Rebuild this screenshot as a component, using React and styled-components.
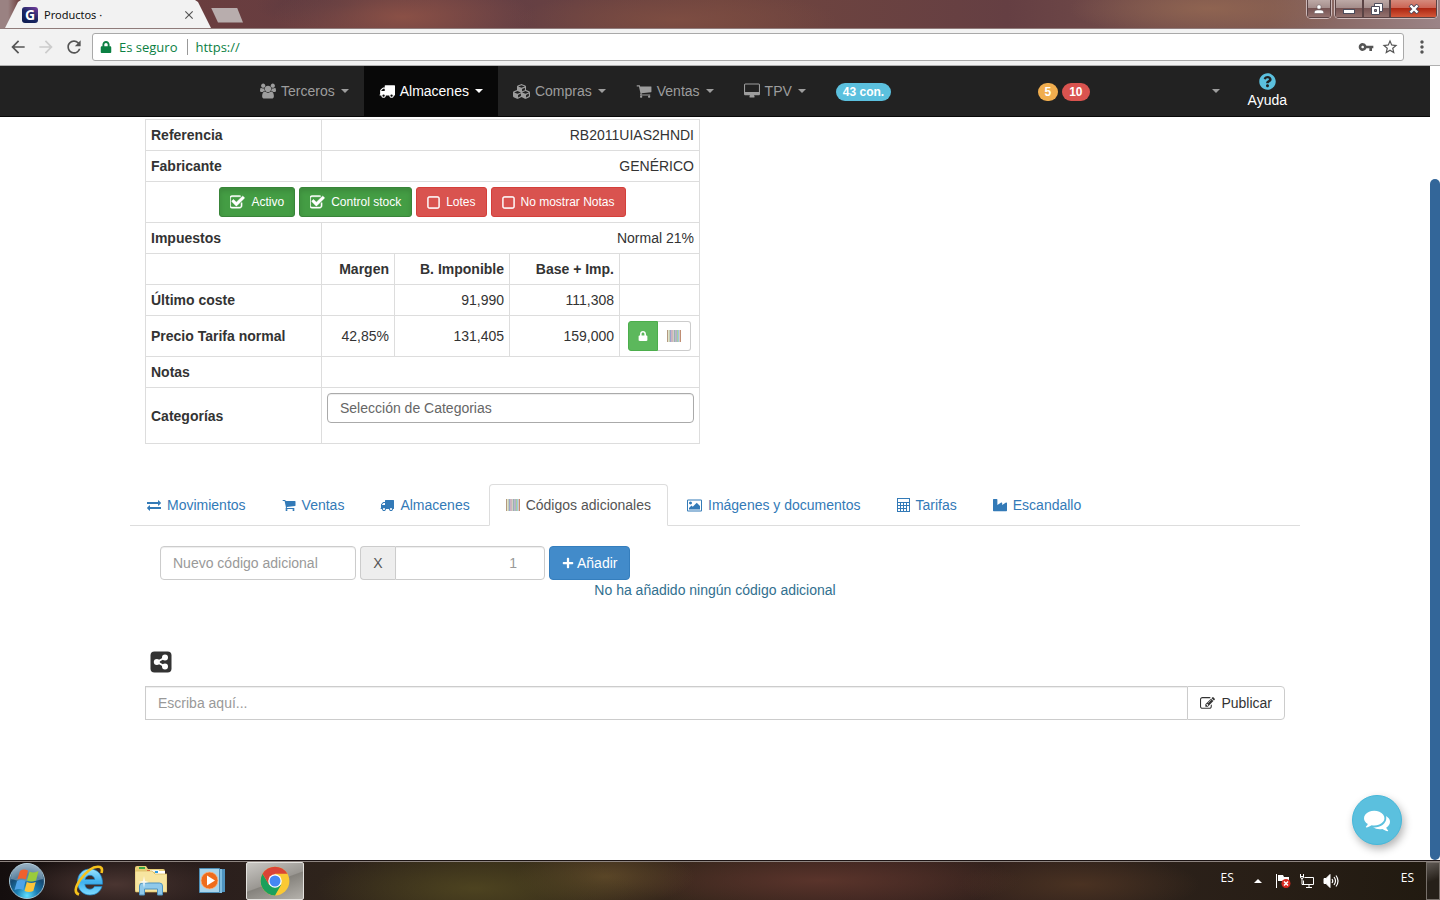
import styled, { createGlobalStyle, css } from "styled-components";
import { FaCubes, FaIndustry, FaLock, FaPlus, FaQuestionCircle } from "react-icons/fa";
import {
  MdArrowBack,
  MdArrowForward,
  MdClose,
  MdMoreVert,
  MdRefresh,
  MdStarBorder,
  MdVpnKey,
} from "react-icons/md";

const ICONS = {
  users: {
    box: "-64 0 1920 1792",
    d: "M529 896q-162 5-265 128h-134q-82 0-138-40.5t-56-118.5q0-353 124-353 6 0 43.5 21t97.5 42.5 119 21.5q67 0 133-23-5 37-5 66 0 139 81 256zm1071 637q0 120-73 189.5t-194 69.5h-874q-121 0-194-69.5t-73-189.5q0-53 3.5-103.5t14-109 26.5-108.5 43-97.5 62-81 85.5-53.5 111.5-20q10 0 43 21.5t73 48 107 48 135 21.5 135-21.5 107-48 73-48 43-21.5q61 0 111.5 20t85.5 53.5 62 81 43 97.5 26.5 108.5 14 109 3.5 103.5zm-1024-1277q0 106-75 181t-181 75-181-75-75-181 75-181 181-75 181 75 75 181zm704 384q0 159-112.5 271.5t-271.5 112.5-271.5-112.5-112.5-271.5 112.5-271.5 271.5-112.5 271.5 112.5 112.5 271.5zm576 225q0 78-56 118.5t-138 40.5h-134q-103-123-265-128 81-117 81-256 0-29-5-66 66 23 133 23 59 0 119-21.5t97.5-42.5 43.5-21q124 0 124 353zm-128-609q0 106-75 181t-181 75-181-75-75-181 75-181 181-75 181 75 75 181z",
  },
  truck: {
    d: "M640 1408q0-52-38-90t-90-38-90 38-38 90 38 90 90 38 90-38 38-90zm-384-512h384v-256h-158q-13 0-22 9l-195 195q-9 9-9 22v30zm1280 512q0-52-38-90t-90-38-90 38-38 90 38 90 90 38 90-38 38-90zm256-1088v1024q0 15-4 26.5t-13.5 18.5-16.5 11.5-23.5 6-22.5 2-25.5 0-22.5-.5q0 106-75 181t-181 75-181-75-75-181h-384q0 106-75 181t-181 75-181-75-75-181h-64q-3 0-22.5.5t-25.5 0-22.5-2-23.5-6-16.5-11.5-13.5-18.5-4-26.5q0-26 19-45t45-19v-320q0-8-.5-35t0-38 2.5-34.5 6.5-37 14-30.5 22.5-30l198-198q19-19 50.5-32t58.5-13h160v-192q0-26 19-45t45-19h1024q26 0 45 19t19 45z",
  },
  cart: {
    d: "M704 1536q0 52-38 90t-90 38-90-38-38-90 38-90 90-38 90 38 38 90zm896 0q0 52-38 90t-90 38-90-38-38-90 38-90 90-38 90 38 38 90zm128-1088v512q0 24-16.5 42.5t-40.5 21.5l-1044 122q13 60 13 70 0 16-24 64h920q26 0 45 19t19 45-19 45-45 19h-1024q-26 0-45-19t-19-45q0-11 8-31.5t16-36 21.5-40 15.5-29.5l-177-823h-204q-26 0-45-19t-19-45 19-45 45-19h256q16 0 28.5 6.5t19.5 15.5 13 24.5 8 26 5.5 29.5 4.5 26h1201q26 0 45 19t19 45z",
  },
  desktop: {
    box: "-64 0 1920 1792",
    d: "M1728 992v-832q0-13-9.5-22.5t-22.5-9.5h-1600q-13 0-22.5 9.5t-9.5 22.5v832q0 13 9.5 22.5t22.5 9.5h1600q13 0 22.5-9.5t9.5-22.5zm128-832v1088q0 66-47 113t-113 47h-544q0 37 16 77.5t32 71 16 43.5q0 26-19 45t-45 19h-512q-26 0-45-19t-19-45q0-14 16-44t32-70 16-78h-544q-66 0-113-47t-47-113v-1088q0-66 47-113t113-47h1600q66 0 113 47t47 113z",
  },
  picture: {
    box: "-64 0 1920 1792",
    d: "M576 576q0 80-56 136t-136 56-136-56-56-136 56-136 136-56 136 56 56 136zm1024 384v448h-1408v-192l320-320 160 160 512-512zm96-704h-1600q-13 0-22.5 9.5t-9.5 22.5v1216q0 13 9.5 22.5t22.5 9.5h1600q13 0 22.5-9.5t9.5-22.5v-1216q0-13-9.5-22.5t-22.5-9.5zm160 32v1216q0 66-47 113t-113 47h-1600q-66 0-113-47t-47-113v-1216q0-66 47-113t113-47h1600q66 0 113 47t47 113z",
  },
  exchange: {
    d: "M1792 1184v192q0 13-9.5 22.5t-22.5 9.5h-1376v192q0 13-9.5 22.5t-22.5 9.5q-12 0-24-10l-319-320q-9-9-9-22 0-14 9-23l320-320q9-9 23-9 13 0 22.5 9.5t9.5 22.5v192h1376q13 0 22.5 9.5t9.5 22.5zm0-544q0 14-9 23l-320 320q-9 9-23 9-13 0-22.5-9.5t-9.5-22.5v-192h-1376q-13 0-22.5-9.5t-9.5-22.5v-192q0-13 9.5-22.5t22.5-9.5h1376v-192q0-14 9-23t23-9q12 0 24 10l319 319q9 9 9 23z",
  },
  checked: {
    box: "128 64 1664 1664",
    d: "M1472 930v318q0 119-84.5 203.5t-203.5 84.5h-832q-119 0-203.5-84.5t-84.5-203.5v-832q0-119 84.5-203.5t203.5-84.5h832q63 0 117 25 15 7 18 23 3 17-9 29l-49 49q-10 10-23 10-3 0-9-2-23-6-45-6h-832q-66 0-113 47t-47 113v832q0 66 47 113t113 47h832q66 0 113-47t47-113v-254q0-13 9-22l64-64q10-10 23-10 6 0 12 3 20 8 20 29zm231-489l-814 814q-24 24-57 24t-57-24l-430-430q-24-24-24-57t24-57l110-110q24-24 57-24t57 24l263 263 647-647q24-24 57-24t57 24l110 110q24 24 24 57t-24 57z",
    weight: 50,
  },
  unchecked: {
    box: "160 96 1472 1472",
    d: "M1312 256h-832q-66 0-113 47t-47 113v832q0 66 47 113t113 47h832q66 0 113-47t47-113v-832q0-66-47-113t-113-47zm288 160v832q0 119-84.5 203.5t-203.5 84.5h-832q-119 0-203.5-84.5t-84.5-203.5v-832q0-119 84.5-203.5t203.5-84.5h832q119 0 203.5 84.5t84.5 203.5z",
    weight: 50,
  },
  edit: {
    d: "M888 1184l116-116-152-152-116 116v56h96v96h56zm440-720q-16-16-33 1l-350 350q-17 17-1 33t33-1l350-350q17-17 1-33zm80 594v190q0 119-84.5 203.5t-203.5 84.5h-832q-119 0-203.5-84.5t-84.5-203.5v-832q0-119 84.5-203.5t203.5-84.5h832q63 0 117 25 15 7 18 23 3 17-9 29l-49 49q-14 14-32 8-23-6-45-6h-832q-66 0-113 47t-47 113v832q0 66 47 113t113 47h832q66 0 113-47t47-113v-126q0-13 9-22l64-64q15-15 35-7t20 29zm-96-738l288 288-672 672h-288v-288zm444 132l-92 92-288-288 92-92q28-28 68-28t68 28l152 152q28 28 28 68t-28 68z",
  },
  comments: {
    d: "M1408 768q0 139-94 257t-256.5 186.5-353.5 68.5q-86 0-176-16-124 88-278 128-36 9-86 16h-3q-11 0-20.5-8t-11.5-21q-1-3-1-6.5t.5-6.5 2-6l2.5-5 3.5-5.5 4-5 4.5-5 4-4.5q5-6 23-25t26-29.5 22.5-29 25-38.5 20.5-44q-124-72-195-177t-71-224q0-139 94-257t256.5-186.5 353.5-68.5 353.5 68.5 256.5 186.5 94 257zm384 256q0 120-71 224.5t-195 176.5q10 24 20.5 44t25 38.5 22.5 29 26 29.5 23 25q1 1 4 4.5t4.5 5 4 5 3.5 5.5l2.5 5 2 6 .5 6.5-1 6.5q-3 14-13 22t-22 7q-50-7-86-16-154-40-278-128-90 16-176 16-271 0-472-132 58 4 88 4 161 0 309-45t264-129q125-92 192-212t67-254q0-77-23-152 129 71 204 178t75 230z",
  },
};

function Icon({ name, size = 14 }) {
  const { box = "0 0 1792 1792", d, weight = 0 } = ICONS[name];
  return (
    <svg width={size} height={size} viewBox={box} fill="currentColor" aria-hidden="true">
      <path d={d} stroke="currentColor" strokeWidth={weight} />
    </svg>
  );
}

const BARS = ["#b39a80", "#cfd3a8", "#9aa6cc", "#c9a3b8", "#b8b0a0", "#98b4b0", "#b0a0c8", "#a8cf9c", "#8fbede", "#c08e74"];

function Barcode({ size = 14 }) {
  return (
    <svg width={size} height="12" viewBox="0 0 14 12" preserveAspectRatio="none" aria-hidden="true">
      {BARS.map((color, i) => (
        <rect key={color} x={i * 1.4} y="0" width={i % 4 ? 1.5 : 1} height="12" fill={color} />
      ))}
    </svg>
  );
}

function Calculator() {
  return (
    <svg width="13" height="14" viewBox="0 0 13 14" fill="currentColor" aria-hidden="true">
      <path
        fillRule="evenodd"
        d="M0 0h13v14H0zM1 1v3h11V1zM1 5v2h2V5zm3 0v2h2V5zm3 0v2h2V5zm3 0v2h2V5zM1 8v2h2V8zm3 0v2h2V8zm3 0v2h2V8zm3 0v5h2V8zm-9 3v2h2v-2zm3 0v2h2v-2zm3 0v2h2v-2z"
      />
    </svg>
  );
}

const MENU = [
  { label: "Terceros", icon: <Icon name="users" size={16} /> },
  { label: "Almacenes", icon: <Icon name="truck" size={16} />, active: true },
  { label: "Compras", icon: <FaCubes size={17} /> },
  { label: "Ventas", icon: <Icon name="cart" size={16} /> },
  { label: "TPV", icon: <Icon name="desktop" size={16} /> },
];

const FLAGS = [
  { label: "Activo", on: true },
  { label: "Control stock", on: true },
  { label: "Lotes", on: false },
  { label: "No mostrar Notas", on: false },
];

const TABS = [
  { label: "Movimientos", icon: <Icon name="exchange" /> },
  { label: "Ventas", icon: <Icon name="cart" /> },
  { label: "Almacenes", icon: <Icon name="truck" /> },
  { label: "Códigos adicionales", icon: <Barcode />, active: true },
  { label: "Imágenes y documentos", icon: <Icon name="picture" size={15} /> },
  { label: "Tarifas", icon: <Calculator /> },
  { label: "Escandallo", icon: <FaIndustry size={14} /> },
];

function BrowserChrome() {
  return (
    <header>
      <TitleBar>
        <BrowserTab>
          <Favicon>G</Favicon>
          <TabTitle>Productos ·</TabTitle>
          <PlainButton aria-label="Cerrar pestaña">
            <MdClose size={14} />
          </PlainButton>
        </BrowserTab>
        <NewTab aria-label="Nueva pestaña" />
        <WindowControls>
          <ControlGroup>
            <WindowButton $width={24} aria-label="Usuario">
              <svg width="10" height="10" viewBox="0 0 10 10" fill="#fff" stroke="#5b4a4e" strokeWidth="0.5">
                <circle cx="5" cy="3" r="2.200" />
                <path d="M.3 9.500V8Q.5 6 3 6h4q2.500 0 2.700 2v1.500z" />
              </svg>
            </WindowButton>
          </ControlGroup>
          <ControlGroup>
            <WindowButton $width={28} aria-label="Minimizar">
              <svg width="12" height="10" viewBox="0 0 12 10">
                <rect x="0.500" y="5.500" width="11" height="4" fill="#fff" stroke="#4d4d5c" />
              </svg>
            </WindowButton>
            <WindowButton $width={27} aria-label="Restaurar">
              <svg width="12" height="12" viewBox="0 0 12 12" fill="#fff" stroke="#4d4d5c">
                <path d="M3.500.5h8v8h-8z" />
                <path d="M.5 3.500h8v8h-8z" />
                <path d="M3.500 6.500h2v2h-2z" fill="#9a8586" />
              </svg>
            </WindowButton>
            <WindowButton $width={47} $danger aria-label="Cerrar">
              <svg width="12" height="10" viewBox="0 0 12 10">
                <path d="M2 1l8 8M10 1L2 9" stroke="#514a5c" strokeWidth="4" />
                <path d="M2.500 1.500l7 7M9.500 1.500l-7 7" stroke="#fff" strokeWidth="2.400" />
              </svg>
            </WindowButton>
          </ControlGroup>
        </WindowControls>
      </TitleBar>
      <Toolbar>
        <PlainButton aria-label="Atrás">
          <MdArrowBack size={20} />
        </PlainButton>
        <PlainButton aria-label="Adelante" $faded>
          <MdArrowForward size={20} />
        </PlainButton>
        <PlainButton aria-label="Recargar">
          <MdRefresh size={20} />
        </PlainButton>
        <AddressBar>
          <FaLock size={12} color="#0b8043" />
          <Secure>Es seguro</Secure>
          <Url aria-label="Dirección" defaultValue="https://" />
          <MdVpnKey size={16} />
          <MdStarBorder size={18} />
        </AddressBar>
        <PlainButton aria-label="Menú">
          <MdMoreVert size={20} />
        </PlainButton>
      </Toolbar>
    </header>
  );
}

function Navbar() {
  return (
    <NavbarBack>
      <NavInner>
        {MENU.map((item) => (
          <NavLink key={item.label} href="#" $active={item.active}>
            {item.icon}
            {item.label}
            <Caret />
          </NavLink>
        ))}
        <NavLink href="#">
          <Badge $color="#5bc0de">43 con.</Badge>
        </NavLink>
        <NavRight>
          <Badge $color="#f0ad4e">5</Badge>
          <Badge $color="#d9534f">10</Badge>
          <UserMenu aria-label="Usuario">
            <Caret />
          </UserMenu>
          <HelpLink href="#">
            <FaQuestionCircle size={17} color="#5bc0de" />
            Ayuda
          </HelpLink>
        </NavRight>
      </NavInner>
    </NavbarBack>
  );
}

function ProductTable() {
  return (
    <Table>
      <colgroup>
        <Col $width={176} />
        <Col $width={73} />
        <Col $width={115} />
        <Col $width={110} />
        <Col $width={80} />
      </colgroup>
      <tbody>
        <tr>
          <Th>Referencia</Th>
          <Td colSpan={4}>RB2011UIAS2HNDI</Td>
        </tr>
        <tr>
          <Th>Fabricante</Th>
          <Td colSpan={4}>GENÉRICO</Td>
        </tr>
        <tr>
          <Td colSpan={5}>
            <FlagRow>
              {FLAGS.map((flag) => (
                <FlagButton key={flag.label} $on={flag.on} aria-pressed={flag.on}>
                  <Icon name={flag.on ? "checked" : "unchecked"} size={flag.on ? 15 : 13} />
                  {flag.label}
                </FlagButton>
              ))}
            </FlagRow>
          </Td>
        </tr>
        <tr>
          <Th>Impuestos</Th>
          <Td colSpan={4}>Normal 21%</Td>
        </tr>
        <tr>
          <Td />
          <Th $right>Margen</Th>
          <Th $right>B. Imponible</Th>
          <Th $right>Base + Imp.</Th>
          <Td />
        </tr>
        <tr>
          <Th>Último coste</Th>
          <Td />
          <Td>91,990</Td>
          <Td>111,308</Td>
          <Td />
        </tr>
        <tr>
          <Th>Precio Tarifa normal</Th>
          <Td>42,85%</Td>
          <Td>131,405</Td>
          <Td>159,000</Td>
          <Td>
            <ButtonGroup>
              <GroupButton $on aria-label="Bloquear precio">
                <FaLock size={10} />
              </GroupButton>
              <GroupButton aria-label="Código de barras">
                <Barcode size={14} />
              </GroupButton>
            </ButtonGroup>
          </Td>
        </tr>
        <tr>
          <Th>Notas</Th>
          <Td colSpan={4} />
        </tr>
        <tr>
          <Th>
            <label htmlFor="categorias">Categorías</label>
          </Th>
          <Td colSpan={4}>
            <CategoryInput id="categorias" placeholder="Selección de Categorias" />
          </Td>
        </tr>
      </tbody>
    </Table>
  );
}

function Taskbar() {
  return (
    <TaskbarBack>
      <TaskButton aria-label="Inicio" $width={54}>
        <svg width="38" height="38" viewBox="0 0 38 38">
          <defs>
            <radialGradient id="orb" cx="50%" cy="92%" r="85%">
              <stop offset="0" stopColor="#5fe0ff" />
              <stop offset="0.350" stopColor="#1c7fb4" />
              <stop offset="0.700" stopColor="#164a73" />
              <stop offset="1" stopColor="#6d8ba3" />
            </radialGradient>
          </defs>
          <circle cx="19" cy="19" r="17.500" fill="url(#orb)" stroke="#a4c4d4" />
          <path d="M3 17a16 16 0 0 1 32 0q-16 5-32 0z" fill="#d8e8f2" opacity="0.350" />
          <path d="M12 9q3.500-2.500 8-.5l-2.200 9q-4.500-2-8.500 0z" fill="#f0602c" />
          <path d="M21.500 9.500q4.500 2 9-.5l-2.500 9.500q-4.500 2-9 0z" fill="#9bcb3c" />
          <path d="M9 19q4.500-2 8.500 0l-2.200 9q-4-2-8.800 0z" fill="#4fa3e8" />
          <path d="M18.800 20q4.500 2 9 0l-2.500 9q-4.500 2-8.800 0z" fill="#fdc53a" />
        </svg>
      </TaskButton>
      <TaskButton aria-label="Internet Explorer" $width={70}>
        <svg width="32" height="32" viewBox="0 0 32 32">
          <defs>
            <linearGradient id="ie" x1="0" y1="0" x2="0" y2="1">
              <stop offset="0" stopColor="#9be4ff" />
              <stop offset="0.500" stopColor="#3fb0ee" />
              <stop offset="1" stopColor="#7fdcff" />
            </linearGradient>
          </defs>
          <path
            fillRule="evenodd"
            d="M17 4C9 4 4.500 10 4.500 17S9.500 30 17 30c6 0 10.500-3.500 12-8.500h-7.500c-1 1.800-2.500 2.700-4.500 2.700-3 0-5-2-5.200-5h17.700C30 10.500 25 4 17 4zm-5 10.500c.6-2.600 2.500-4.200 5-4.200s4.400 1.600 4.800 4.200z"
            fill="url(#ie)"
            stroke="#1f86c8"
            strokeWidth="0.700"
          />
          <path d="M6 29.500Q-1 27 7 15 18 0 27 2q3 1 1.500 6" fill="none" stroke="#f6c21c" strokeWidth="2.600" />
        </svg>
      </TaskButton>
      <TaskButton aria-label="Explorador" $width={54}>
        <svg width="32" height="30" viewBox="0 0 32 30">
          <path d="M0 2q0-2 2-2h9l2 3h15q2 0 2 2v3H0z" fill="#e8cf78" />
          <path d="M4 1h6v2H4z" fill="#39a845" />
          <path d="M12 4h12v2H12z" fill="#f6f3e4" />
          <path d="M12 4h3v2h-3z" fill="#d8452d" />
          <path d="M20 5h10v3H20z" fill="#fff" />
          <path d="M20 5h3v2h-3z" fill="#2f9de0" />
          <path d="M0 5h17l3 3h12v18H1q-1 0-1-2z" fill="#f7e5a0" stroke="#d7b75c" strokeWidth="0.700" />
          <path d="M4.500 29V20q0-3 3-3h17q3 0 3 3v9h-5v-6h-13v6z" fill="#8fc9ea" stroke="#4f93c0" />
          <path d="M9 10l1 5 4 1-4 1-1 5-1-5-5-1 5-1z" fill="#fff" opacity="0.800" />
        </svg>
      </TaskButton>
      <TaskButton aria-label="Reproductor" $width={68}>
        <svg width="27" height="26" viewBox="0 0 27 26">
          <path d="M5 2l21-1v23L5 25z" fill="#4f93bf" />
          <path d="M3 1h20v24H3z" fill="#7fbde0" />
          <path d="M.5.500h20v24H.5z" fill="#a9d5ec" stroke="#4d8fb8" />
          <circle cx="10.500" cy="12.500" r="8.500" fill="#ee6c1c" stroke="#f9b685" strokeWidth="0.800" />
          <path d="M8 7.500l8 5-8 5z" fill="#fff" />
        </svg>
      </TaskButton>
      <TaskButton aria-label="Chrome" $width={58} $open>
        <svg width="30" height="30" viewBox="0 0 48 48">
          <circle cx="24" cy="24" r="23" fill="#fbc934" />
          <path d="M4.100 12.500A23 23 0 0 0 24 47L34 29.500 24 34l-9.500-4.500z" fill="#1ba05c" />
          <path d="M4.100 12.500L14.500 30 24 12.500h19.900A23 23 0 0 0 4.100 12.500z" fill="#da4436" />
          <circle cx="24" cy="24" r="10.800" fill="#fff" />
          <circle cx="24" cy="24" r="8.800" fill="#4587f3" />
        </svg>
      </TaskButton>
      <Tray>
        <TrayText>ES</TrayText>
        <MoreIcons width="8" height="4" viewBox="0 0 8 4" fill="#fff">
          <path d="M4 0l4 4H0z" />
        </MoreIcons>
        <svg width="16" height="16" viewBox="0 0 16 16">
          <path d="M1 1h1v14H1zM3 2h5l1 2h5v6H8L7 8H3z" fill="#fff" />
          <circle cx="11" cy="10.500" r="4.500" fill="#d8281e" />
          <path d="M9 8.500l4 4m0-4l-4 4" stroke="#fff" strokeWidth="1.500" />
        </svg>
        <svg width="16" height="16" viewBox="0 0 16 16" fill="none" stroke="#fff">
          <path d="M5.500 4.500h9v7h-10v-4M7 14.500h6M10 12v2" />
          <path d="M1.500 1v3q0 1.500 1.500 1.500T4.500 4V1M1 3.500h4M3 5.500v6h2" />
        </svg>
        <svg width="16" height="16" viewBox="0 0 16 16" fill="none" stroke="#fff">
          <path d="M1 5.500h2l4-4v13l-4-4H1z" fill="#fff" />
          <path d="M9 6q1.500 2 0 4M11 4q3 4 0 8M13 2.500q4 5.500 0 11" strokeWidth="1.200" />
        </svg>
      </Tray>
      <TrayText>ES</TrayText>
      <ShowDesktop aria-label="Mostrar escritorio" />
    </TaskbarBack>
  );
}

function App() {
  return (
    <Screen>
      <GlobalStyle />
      <BrowserChrome />
      <Viewport>
        <Page>
          <Navbar />
          <Container>
            <ProductTable />
            <TabList>
              {TABS.map((tab) => (
                <TabLink key={tab.label} href="#" $active={tab.active}>
                  {tab.icon}
                  {tab.label}
                </TabLink>
              ))}
            </TabList>
            <CodeForm>
              <CodeInput aria-label="Nuevo código adicional" placeholder="Nuevo código adicional" />
              <InputGroup>
                <Addon>X</Addon>
                <AmountInput aria-label="Cantidad" placeholder="1" />
              </InputGroup>
              <AddButton>
                <FaPlus size={12} />
                Añadir
              </AddButton>
            </CodeForm>
            <EmptyText>No ha añadido ningún código adicional</EmptyText>
            <ShareButton aria-label="Compartir">
              <svg width="22" height="22" viewBox="0 0 22 22">
                <rect x="0.500" y="0.500" width="21" height="21" rx="4" fill="#333" />
                <path d="M15 6.500L7 11l8 4.500" fill="none" stroke="#fff" strokeWidth="2" />
                <circle cx="15" cy="6.500" r="3" fill="#fff" />
                <circle cx="6.800" cy="11" r="3" fill="#fff" />
                <circle cx="15" cy="15.500" r="3" fill="#fff" />
              </svg>
            </ShareButton>
            <PublishGroup>
              <PublishInput aria-label="Comentario" placeholder="Escriba aquí..." />
              <PublishButton>
                <Icon name="edit" size={15} />
                Publicar
              </PublishButton>
            </PublishGroup>
          </Container>
        </Page>
        <ScrollTrack>
          <ScrollThumb />
        </ScrollTrack>
        <ChatButton aria-label="Chat">
          <Icon name="comments" size={26} />
        </ChatButton>
      </Viewport>
      <Taskbar />
    </Screen>
  );
}

export default App;

const GlobalStyle = createGlobalStyle`
  *, *::before, *::after {
    box-sizing: border-box;
  }

  body {
    margin: 0;
    color: #333;
    background: #fff;
    font: 14px/20px "Liberation Sans", Arial, sans-serif;
  }

  button, input {
    margin: 0;
    font: inherit;
    color: inherit;
  }

  button {
    cursor: pointer;
  }

  a {
    text-decoration: none;
  }

  svg {
    flex: none;
    display: block;
  }
`;

const Screen = styled.div`
  display: flex;
  flex-direction: column;
  height: 100vh;
  overflow: hidden;
`;

const TitleBar = styled.div`
  display: flex;
  align-items: flex-end;
  height: 29px;
  padding-left: 5px;
  border-bottom: 1px solid #8f7b7a;
  background: linear-gradient(90deg, #9a8282 0, #9a8282 8px, transparent 20px),
    radial-gradient(ellipse 130px 40px at 28% 60%, #8a5046, transparent),
    radial-gradient(ellipse 90px 24px at 24% 20%, #553840, transparent),
    radial-gradient(ellipse 160px 30px at 47% 70%, #7d4d42, transparent),
    radial-gradient(ellipse 140px 30px at 84% 30%, #8f6451, transparent),
    linear-gradient(90deg, #6d3c3b, #643f44 35%, #70453e 50%, #653f43 70%, #7e5850 88%, #9b8487);
`;

const PlainButton = styled.button`
  display: flex;
  padding: 0;
  border: 0;
  background: none;
  color: ${({ $faded }) => ($faded ? "#ccc" : "#555")};
`;

const BrowserTab = styled.div`
  display: flex;
  align-items: center;
  width: 206px;
  height: 28px;
  padding: 2px 15px 0 17px;
  background: #f2f2f2;
  clip-path: polygon(0 100%, 13px 2px, 16px 0, 190px 0, 193px 2px, 100% 100%);
`;

const Favicon = styled.span`
  width: 16px;
  height: 16px;
  border-radius: 3px;
  background: linear-gradient(215deg, #7b3fa0, #1a2765 50%, #0d1b4e);
  color: #fff;
  font: bold 14px/16px "Open Sans", sans-serif;
  text-align: center;
`;

const TabTitle = styled.span`
  flex: 1;
  margin-left: 6px;
  color: #111;
  font: 11px/16px "Noto Sans", sans-serif;
`;

const NewTab = styled.button`
  align-self: center;
  width: 32px;
  height: 15px;
  margin-top: 2px;
  border: 0;
  background: #b8adad;
  clip-path: polygon(0 0, 26px 0, 100% 100%, 7px 100%);
`;

const WindowControls = styled.div`
  display: flex;
  align-self: flex-start;
  gap: 2px;
  margin-left: auto;
  padding-right: 2px;
`;

const ControlGroup = styled.div`
  display: flex;
  overflow: hidden;
  border: 1px solid #cdb9b9;
  border-top: 0;
  border-radius: 0 0 5px 5px;
`;

const WindowButton = styled.button`
  display: flex;
  align-items: center;
  justify-content: center;
  width: ${({ $width }) => $width}px;
  height: 18px;
  padding: 0;
  border: 1px solid #5a4344;
  border-top: 0;
  background: ${({ $danger }) =>
    $danger
      ? "linear-gradient(#d58a7c, #cc6555 45%, #ad2712 50%, #d3583a)"
      : "linear-gradient(#bda9a6, #a58e8c 45%, #775453 50%, #93716e)"};
`;

const Toolbar = styled.div`
  display: flex;
  align-items: center;
  gap: 8px;
  height: 37px;
  padding: 0 8px;
  border-bottom: 1px solid #b0b0b0;
  background: #f2f2f2;
`;

const AddressBar = styled.div`
  display: flex;
  flex: 1;
  align-items: center;
  height: 28px;
  gap: 7px;
  padding: 0 4px 0 7px;
  border: 1px solid #a9a9a9;
  border-radius: 3px;
  background: #fff;
  color: #555;
  font: 13px/16px "Open Sans", sans-serif;
`;

const Secure = styled.span`
  padding-right: 10px;
  border-right: 1px solid #999;
  color: #0b8043;
`;

const Url = styled.input`
  flex: 1;
  min-width: 0;
  padding: 0;
  border: 0;
  outline: 0;
  color: #0b8043;
`;

const Viewport = styled.div`
  position: relative;
  display: flex;
  flex: 1;
  min-height: 0;
`;

const Page = styled.main`
  flex: 1;
  min-width: 0;
  overflow: hidden;
`;

const NavbarBack = styled.nav`
  height: 51px;
  border-bottom: 1px solid #080808;
  background: #222;
`;

const NavInner = styled.div`
  display: flex;
  max-width: 1170px;
  height: 50px;
  margin: 0 auto;
  padding: 0 13px 0 115px;
`;

const NavLink = styled.a`
  display: flex;
  align-items: center;
  gap: 5px;
  padding: 0 15px;
  color: ${({ $active }) => ($active ? "#fff" : "#9d9d9d")};
  background: ${({ $active }) => ($active ? "#080808" : "transparent")};
`;

const Caret = styled.span`
  margin-left: 1px;
  border-top: 4px solid currentColor;
  border-right: 4px solid transparent;
  border-left: 4px solid transparent;
`;

const Badge = styled.span`
  margin-top: 2px;
  padding: 3px 7px;
  border-radius: 10px;
  color: #fff;
  background: ${({ $color }) => $color};
  font-size: 12px;
  font-weight: bold;
  line-height: 12px;
`;

const NavRight = styled.div`
  display: flex;
  align-items: center;
  gap: 4px;
  margin-left: auto;
`;

const UserMenu = styled.button`
  display: flex;
  align-items: center;
  height: 50px;
  padding: 0 0 0 117px;
  border: 0;
  background: none;
  color: #9d9d9d;
`;

const HelpLink = styled.a`
  display: flex;
  flex-direction: column;
  align-items: center;
  margin-left: 24px;
  color: #fff;
`;

const Container = styled.div`
  max-width: 1170px;
  margin: 2px auto 0;
  padding: 0 15px;
`;

const Table = styled.table`
  width: 555px;
  border-collapse: collapse;
  table-layout: fixed;
`;

const Col = styled.col`
  width: ${({ $width }) => $width}px;
`;

const cell = css`
  height: 31px;
  padding: 5px;
  border: 1px solid #ddd;
`;

const Th = styled.th`
  ${cell}
  text-align: ${({ $right }) => ($right ? "right" : "left")};
`;

const Td = styled.td`
  ${cell}
  text-align: right;
`;

const FlagRow = styled.div`
  display: flex;
  justify-content: center;
  gap: 4px;
`;

const FlagButton = styled.button`
  display: flex;
  align-items: center;
  gap: 6px;
  height: 30px;
  padding: 0 10px;
  border: 1px solid ${({ $on }) => ($on ? "#398439" : "#d43f3a")};
  border-radius: 3px;
  color: #fff;
  background: ${({ $on }) => ($on ? "#449d44" : "#d9534f")};
  box-shadow: ${({ $on }) => ($on ? "inset 0 3px 5px rgba(0, 0, 0, 0.125)" : "none")};
  font-size: 12px;
`;

const ButtonGroup = styled.div`
  display: flex;
  justify-content: center;
`;

const GroupButton = styled.button`
  display: flex;
  align-items: center;
  height: 30px;
  padding: 0 9px;
  border: 1px solid ${({ $on }) => ($on ? "#4cae4c" : "#ccc")};
  border-radius: ${({ $on }) => ($on ? "3px 0 0 3px" : "0 3px 3px 0")};
  border-left-width: ${({ $on }) => ($on ? "1px" : "0")};
  color: #fff;
  background: ${({ $on }) => ($on ? "#5cb85c" : "#fff")};
`;

const field = css`
  height: 34px;
  padding: 6px 12px;
  border: 1px solid #ccc;
  border-radius: 4px;
  background: #fff;
  box-shadow: inset 0 1px 1px rgba(0, 0, 0, 0.075);

  &::placeholder {
    color: #999;
    opacity: 1;
  }
`;

const CategoryInput = styled.input`
  ${field}
  display: block;
  width: 100%;
  height: 30px;
  margin-bottom: 15px;
  padding: 4px 12px;
  border-color: #aaa;

  &::placeholder {
    color: #666;
  }
`;

const TabList = styled.nav`
  display: flex;
  gap: 2px;
  margin: 40px -15px 0;
  border-bottom: 1px solid #ddd;
`;

const TabLink = styled.a`
  display: flex;
  align-items: center;
  gap: 6px;
  margin-bottom: -1px;
  padding: 10px 16px;
  border: 1px solid transparent;
  border-radius: 4px 4px 0 0;
  color: #337ab7;

  ${({ $active }) =>
    $active &&
    css`
      border-color: #ddd #ddd #fff;
      color: #555;
      background: #fff;
    `}
`;

const CodeForm = styled.div`
  display: flex;
  gap: 4px;
  padding: 20px 15px 0;
`;

const CodeInput = styled.input`
  ${field}
  width: 196px;
`;

const InputGroup = styled.div`
  display: flex;
`;

const Addon = styled.span`
  width: 35px;
  padding: 6px 0;
  border: 1px solid #ccc;
  border-right: 0;
  border-radius: 4px 0 0 4px;
  color: #555;
  background: #eee;
  text-align: center;
`;

const AmountInput = styled.input`
  ${field}
  width: 150px;
  padding-right: 27px;
  border-radius: 0 4px 4px 0;
  text-align: right;
`;

const AddButton = styled.button`
  display: flex;
  align-items: center;
  gap: 3px;
  height: 34px;
  padding: 0 12px;
  border: 1px solid #357ebd;
  border-radius: 4px;
  color: #fff;
  background: #428bca;
`;

const EmptyText = styled.p`
  margin: 0;
  color: #31708f;
  text-align: center;
`;

const ShareButton = styled.button`
  display: block;
  margin: 51px 0 13px;
  padding: 0 5px;
  border: 0;
  background: none;
`;

const PublishGroup = styled.div`
  display: flex;
`;

const PublishInput = styled.input`
  ${field}
  flex: 1;
  min-width: 0;
  border-right: 0;
  border-radius: 0;
`;

const PublishButton = styled.button`
  display: flex;
  align-items: center;
  gap: 6px;
  height: 34px;
  padding: 0 12px;
  border: 1px solid #ccc;
  border-radius: 0 4px 4px 0;
  background: #fff;
`;

const ScrollTrack = styled.div`
  display: grid;
  grid-template-rows: 1fr 6fr;
  width: 10px;
`;

const ScrollThumb = styled.div`
  grid-row: 2;
  border-radius: 5px;
  background: #336699;
`;

const ChatButton = styled.button`
  position: absolute;
  right: 38px;
  bottom: 15px;
  display: flex;
  align-items: center;
  justify-content: center;
  width: 50px;
  height: 50px;
  padding: 0;
  border: 1px solid #46b8da;
  border-radius: 50%;
  color: #fff;
  background: #5bc0de;
  box-shadow: 2px 4px 8px rgba(0, 0, 0, 0.3);
`;

const TaskbarBack = styled.footer`
  display: flex;
  align-items: center;
  height: 40px;
  border-top: 1px solid #1c1414;
  box-shadow: inset 0 1px #8d8480;
  background: radial-gradient(ellipse 110px 30px at 8% 60%, #4a3531, transparent),
    radial-gradient(ellipse 160px 40px at 33% 70%, #4d4320, transparent),
    radial-gradient(ellipse 90px 30px at 42% 40%, #5c4628, transparent),
    radial-gradient(ellipse 200px 30px at 57% 50%, #5a342b, transparent),
    radial-gradient(ellipse 120px 30px at 75% 60%, #4a3222, transparent),
    linear-gradient(90deg, #140e0e, #2b1f1d 15%, #332a18 35%, #3a231f 60%, #2c211a 80%, #211a10);
`;

const TaskButton = styled.button`
  display: flex;
  flex: none;
  align-items: center;
  justify-content: center;
  width: ${({ $width }) => $width}px;
  height: 38px;
  padding: 0;
  border: ${({ $open }) => ($open ? "1px solid #e4e2de" : "0")};
  border-radius: 2px;
  background: ${({ $open }) =>
    $open ? "linear-gradient(160deg, #c9c7c3, #9a9792 50%, #85827c 52%, #b5b2ac)" : "none"};
`;

const Tray = styled.div`
  display: flex;
  align-items: center;
  gap: 8px;
  margin-left: auto;
  padding-right: 62px;
`;

const TrayText = styled.span`
  margin: 0 12px 6px 0;
  color: #fff;
  font: 12px/16px "Open Sans", sans-serif;
`;

const MoreIcons = styled.svg`
  margin-right: 5px;
`;

const ShowDesktop = styled.button`
  width: 14px;
  height: 38px;
  padding: 0;
  border: 1px solid #77706a;
  background: linear-gradient(160deg, #5f5954, #262019 50%);
`;
